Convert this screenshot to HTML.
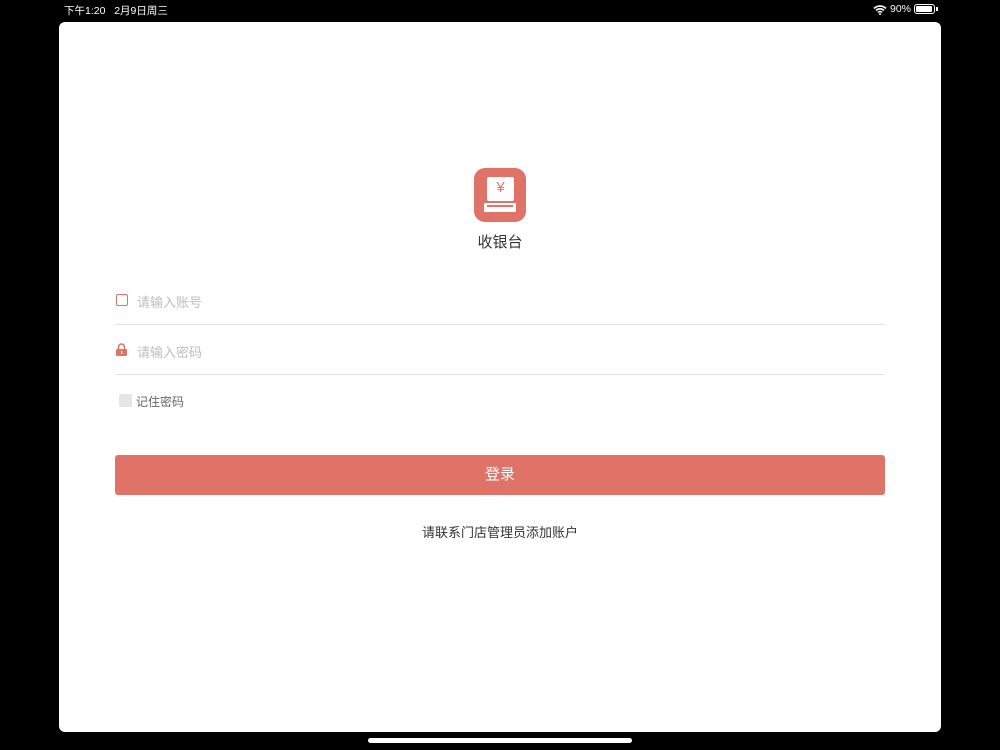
<!DOCTYPE html>
<html><head><meta charset="utf-8"><style>
*{margin:0;padding:0;box-sizing:border-box}
body{width:1000px;height:750px;background:#000;position:relative;overflow:hidden;font-family:"Liberation Sans","Noto Sans CJK SC",sans-serif}
.sb{position:absolute;top:3px;color:#fff;font-size:10.5px}
.card{position:absolute;left:59px;top:22px;width:882px;height:710px;background:#fff;border-radius:6px}
.abs{position:absolute}
.line{position:absolute;left:56px;width:770px;height:1px;background:#e2e2e2}
.ph{position:absolute;left:78px;font-size:13px;color:#bdbdbd}
</style></head><body>
<div class="sb" style="left:64px">下午1:20&nbsp;&nbsp;&nbsp;2月9日周三</div>
<svg class="abs" style="left:873px;top:4px" width="14" height="11" viewBox="0 0 14 11"><path d="M1 4.5a8.5 8.5 0 0 1 12 0M3 6.5a5.5 5.5 0 0 1 8 0M5 8.5a2.5 2.5 0 0 1 4 0" stroke="#fff" stroke-width="1.6" fill="none"/><circle cx="7" cy="10" r="1" fill="#fff"/></svg>
<div class="sb" style="left:890px">90%</div>
<div class="abs" style="left:914px;top:4px;width:21px;height:10px;border:1px solid #fff;border-radius:3px;padding:1px"><div style="width:16px;height:6px;background:#fff;border-radius:1px"></div></div>
<div class="abs" style="left:936px;top:7px;width:1.5px;height:4px;background:#fff"></div>
<div class="card">
 <div class="abs" style="left:415px;top:146px;width:52px;height:54px;background:#df7367;border-radius:11px">
  <div class="abs" style="left:13px;top:9px;width:27px;height:24px;background:#fff;border-radius:2px;color:#df7367;font-size:15px;text-align:center;line-height:22px">¥</div>
  <div class="abs" style="left:10px;top:35px;width:32px;height:9px;background:#fff;border-radius:1px"></div>
  <div class="abs" style="left:13px;top:37px;width:26px;height:1.5px;background:#df7367"></div>
 </div>
 <div class="abs" style="left:0;width:882px;top:209px;text-align:center;font-size:15px;color:#333">收银台</div>
 <div class="abs" style="left:57px;top:272px;width:12px;height:12px;border:1.5px solid #df7367;border-radius:2px"></div>
 <div class="ph" style="top:270px">请输入账号</div>
 <div class="line" style="top:302px"></div>
 <svg class="abs" style="left:56px;top:321px" width="13" height="13" viewBox="0 0 13 13"><path d="M3.5 6V4a3 3 0 0 1 6 0v2" stroke="#df7367" stroke-width="1.6" fill="none"/><rect x="1" y="6" width="11" height="7" rx="1" fill="#df7367"/><rect x="6" y="8" width="1.2" height="3" fill="#fff"/></svg>
 <div class="ph" style="top:320px">请输入密码</div>
 <div class="line" style="top:352px"></div>
 <div class="abs" style="left:60px;top:372px;width:13px;height:13px;background:#e5e5e5;border-radius:2px"></div>
 <div class="abs" style="left:77px;top:371px;font-size:12px;color:#666">记住密码</div>
 <div class="abs" style="left:56px;top:433px;width:770px;height:40px;background:#df7367;border-radius:3px;color:#fff;font-size:15px;text-align:center;line-height:40px">登录</div>
 <div class="abs" style="left:0;width:882px;top:500px;text-align:center;font-size:13px;color:#333">请联系门店管理员添加账户</div>
</div>
<div class="abs" style="left:368px;top:738px;width:264px;height:5px;background:#fff;border-radius:3px"></div>
</body></html>
